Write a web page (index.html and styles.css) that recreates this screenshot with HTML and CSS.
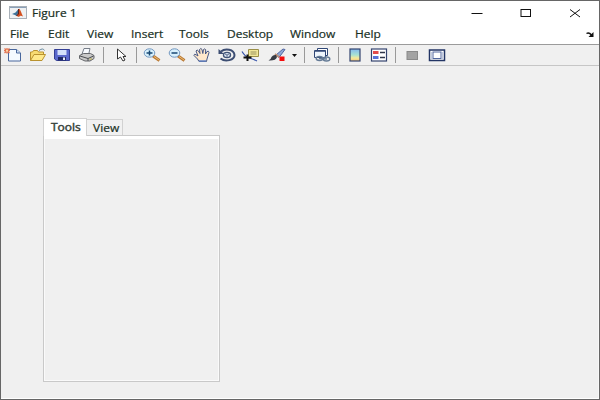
FILE: index.html
```html
<!DOCTYPE html>
<html lang="en">
<head>
<meta charset="utf-8">
<title>Figure 1</title>
<link rel="stylesheet" href="styles.css">
</head>
<body>
<div class="window">
  <header class="titlebar">
    <svg class="logo" width="18" height="13" viewBox="0 0 18 13"><rect x=".5" y=".5" width="17" height="12" fill="#eff1f3" stroke="#a9b1b9"/><path d="M1 1.500h16" stroke="#8aa0b8"/><path d="M3 8l3.500-1.500L9.500 3v5L7.500 10 6 9z" fill="#3d7198"/><path d="M10 2.500c1.500 1 2.500 5 4 8-2-1-3-1-4 .5C9.500 11 8.500 10 7.500 10 9 8 9.500 5 10 2.500z" fill="#d4501e"/><path d="M9.500 3v5L7.500 10" stroke="#5a2020" fill="none"/></svg>
    <span class="title">Figure 1</span>
    <div class="controls">
      <svg width="12" height="12"><path d="M.5 6.500h11" stroke="#111"/></svg>
      <svg width="12" height="12"><rect x="1" y="2.500" width="9.500" height="7" fill="none" stroke="#111"/></svg>
      <svg width="12" height="12"><path d="M1 2.500l10 7.500M11 2.500L1 10" stroke="#111"/></svg>
    </div>
  </header>
  <nav class="menubar">
    <span>File</span><span>Edit</span><span>View</span><span>Insert</span><span>Tools</span><span>Desktop</span><span>Window</span><span>Help</span>
    <svg class="dock-arrow" width="9" height="7"><path d="M.5 2.500Q3 1 5.500 4" fill="none" stroke="#111" stroke-width="1.400"/><path d="M7.500 1v5h-5z" fill="#111"/></svg>
  </nav>
  <div class="toolbar">
    <svg class="icon" viewBox="0 0 20 16"><path d="M5.500 2.500h8l4 3.500v8h-12z" fill="#f5faff" stroke="#49679c"/><path d="M13.500 2.500V6h4" fill="#cfe0f5" stroke="#49679c"/><path d="M1.500 1.500l5 4.500M6.500 1.500L1.500 6M1 3.700h6M4 1v5.500" stroke="#e2714e" stroke-width="1.300"/><rect x="3" y="2.700" width="2" height="2" fill="#ffd4a2"/></svg>
    <svg class="icon" viewBox="0 0 20 16"><path d="M2.500 13.500V5h2l1-1.500h4L10.500 5h5v3" fill="#f8dc72" stroke="#b9922f"/><path d="M2.500 13.500L6 7.500h11.500l-3.500 6z" fill="#ffe98a" stroke="#b9922f"/><path d="M11 3.500q4-3 5.500 0" fill="none" stroke="#688aa0"/></svg>
    <svg class="icon" viewBox="0 0 20 16"><path d="M2.500 2.500h15v11h-13l-2-1.500z" fill="#5b69cc" stroke="#343f94"/><path d="M5.500 3h9v5h-9z" fill="#d5e1fa"/><path d="M6 10h8v3.500H6z" fill="#202a66"/><path d="M11 10.500h2v2.500h-2z" fill="#e8edfa"/></svg>
    <svg class="icon" viewBox="0 0 20 16"><path d="M5 7l2-5.500h6L11.500 8z" fill="#f8fbff" stroke="#777e89"/><path d="M2.500 8.500l4-2h7l3.500 2v3L13 14H8l-5.500-2.500z" fill="#c8c8c8" stroke="#65676b"/><path d="M3 9l8 2.500 5.500-2.500M11 11.500V14" fill="none" stroke="#4a4c50"/><path d="M12.500 12h2.500" stroke="#bdae46"/></svg>
    <i class="sep"></i>
    <svg class="icon" viewBox="0 0 20 16"><path d="M6.500 2v10l3-2 2.500 4 2-1-2-3.500h3z" fill="#fff" stroke="#333"/></svg>
    <i class="sep"></i>
    <svg class="icon" viewBox="0 0 20 16"><path d="M11 9l6.500 4.500" stroke="#b97935" stroke-width="3"/><path d="M12 9.500l5 3.500" stroke="#edbd72"/><ellipse cx="7.500" cy="6" rx="5.300" ry="4.200" fill="#d7f0fc" stroke="#7196bf"/><path d="M4.500 6h6M7.500 3.500v5" stroke="#174773" stroke-width="1.500"/></svg>
    <svg class="icon" viewBox="0 0 20 16"><path d="M11 9l6.500 4.500" stroke="#b97935" stroke-width="3"/><path d="M12 9.500l5 3.500" stroke="#edbd72"/><ellipse cx="7.500" cy="6" rx="5.300" ry="4.200" fill="#d7f0fc" stroke="#7196bf"/><path d="M4.500 6h6" stroke="#174773" stroke-width="1.500"/></svg>
    <svg class="icon" viewBox="0 0 20 16"><path d="M7 14.500L5.500 12 2 8.500q0-2 2-.8L6 9 4 4q1-2 2.500 0L8 6.500 7.500 2.500q1.500-2 2.500 0l.8 4 .7-4q1.500-1.500 2.200.3L13.500 7 15 4.500q2-1 2 1L15 12l-.5 2.500z" fill="#ffe8cb" stroke="#465784"/><path d="M7 14h7" stroke="#6684c4" stroke-width="1.500"/></svg>
    <svg class="icon" viewBox="0 0 20 16"><path d="M4 4.500C8 1 17 2 17.500 8c0 5-9 7.500-14 3.500" fill="none" stroke="#3d4e73" stroke-width="2"/><path d="M1.500 2v5h5.500z" fill="#3d4e73"/><ellipse cx="10" cy="8" rx="3.500" ry="2.600" fill="#dfe9f7" stroke="#415477" stroke-width="1.400"/><path d="M8 7l2 1 2-1M10 8v2" fill="none" stroke="#415477" stroke-width=".8"/></svg>
    <svg class="icon" viewBox="0 0 20 16"><path d="M7.500 2.500h10v7h-10z" fill="#f1e79a" stroke="#9a8f48"/><path d="M9.500 5h6M9.500 7h6" stroke="#99915f"/><path d="M1 4.500q3 5 7 6.500 4 1 8 3" fill="none" stroke="#3452aa" stroke-width="1.200"/><path d="M2.500 10.500h8M6.500 7.500V14" stroke="#111" stroke-width="2"/></svg>
    <svg class="icon" viewBox="0 0 20 16"><path d="M9 8l7-6 2 .5-6 8z" fill="#8ea7d4" stroke="#5367a1"/><path d="M8 7l4 3" stroke="#bd8f76" stroke-width="2"/><path d="M1.500 13.500q2.500-1 3-3.500Q6 7.500 9 8l1 2q-1 4-8.500 3.500z" fill="#363b44"/><rect x="12.500" y="9.500" width="5" height="4.500" fill="#f40c0c"/></svg>
    <svg class="drop" viewBox="0 0 5 3"><path d="M0 0h5L2.500 3z" fill="#111"/></svg>
    <i class="sep"></i>
    <svg class="icon" viewBox="0 0 20 16"><path d="M5.500 1.500h10v7h-10z" fill="#fff" stroke="#304776"/><path d="M2.500 3.500h11v7h-11z" fill="#edf4fc" stroke="#304776"/><path d="M3 4h10.500" stroke="#304776" stroke-width="1.500"/><g fill="none" stroke="#657b96" stroke-width="1.400"><ellipse cx="7.500" cy="11.500" rx="3.300" ry="2"/><ellipse cx="14.500" cy="12" rx="3.300" ry="2"/><path d="M7 11.500l8 .5"/></g></svg>
    <i class="sep"></i>
    <svg class="icon" viewBox="0 0 20 16"><defs><linearGradient id="heat" x2="0" y2="1"><stop stop-color="#83b9ef"/><stop offset=".5" stop-color="#a9e2d2"/><stop offset=".75" stop-color="#f5e99a"/><stop offset="1" stop-color="#f4c67c"/></linearGradient></defs><rect x="5" y="2" width="10" height="12" fill="url(#heat)" stroke="#34446f" stroke-width="1.200"/></svg>
    <svg class="icon" viewBox="0 0 20 16"><rect x="2.500" y="2" width="15" height="12" fill="#fff" stroke="#34446f" stroke-width="1.200"/><path d="M4 4h5.500v3H4z" fill="#e34b4b"/><path d="M4 9h5.500v3H4z" fill="#5873d9"/><path d="M11 5.500h5M11 10.500h5" stroke="#30364a" stroke-width="1.300"/></svg>
    <i class="sep"></i>
    <svg class="icon" viewBox="0 0 20 16"><rect x="5" y="4.500" width="10.500" height="8" fill="#a3a3a3" stroke="#8a8a8a"/></svg>
    <svg class="icon" viewBox="0 0 20 16"><rect x="2.500" y="3" width="15" height="10.500" fill="#fff" stroke="#233565" stroke-width="1.500"/><rect x="6" y="5" width="8" height="6.500" fill="#fff" stroke="#52679d"/><path d="M4.500 5v7M15.500 5v7" stroke="#a8b5d3" stroke-width=".7"/></svg>
  </div>
  <main class="canvas">
    <div class="tabs"><div class="tab active"><span>Tools</span></div><div class="tab"><span>View</span></div></div>
    <section class="panel"></section>
  </main>
</div>
</body>
</html>
```
FILE: styles.css
```css
* { box-sizing: border-box; }
body { margin: 0; font: 10.5px/14px "Open Sans", "Noto Sans", sans-serif; color: #18301f; }
.window { width: 600px; height: 400px; display: flex; flex-direction: column; background: #f0f0f0; border: 1px solid #666; overflow: hidden; }
.titlebar { height: 23px; flex: none; display: flex; align-items: center; padding-left: 8px; background: #fff; }
.title { margin-left: 5px; transform: scaleX(1.14); transform-origin: left; -webkit-text-stroke: .2px; }
.controls { display: flex; gap: 37px; margin-left: auto; padding-right: 18px; }
.controls svg, .logo { display: block; }
.menubar { height: 20px; flex: none; display: grid; grid-template-columns: 38px 39px 44px 48px 48px 63px 65px 1fr 9px; align-items: center; padding: 0 4px 0 8.5px; background: #fff; }
.menubar span { width: max-content; transform: scaleX(1.14); transform-origin: left; -webkit-text-stroke: .2px; }
.toolbar { height: 22px; flex: none; display: grid; grid-template-columns: 24px 25px 24px 25px 8px 27px 5px 26px 24px 26px 23px 26px 25px 11px 9px 25px 8px 25px 24px 8px 26px 23px; align-items: center; justify-items: center; border-top: 1px solid #9b9b9b; border-bottom: 1px solid #c6c6c6; background: #f0f0f0; }
.icon { display: block; width: 20px; height: 16px; }
.drop { display: block; width: 5px; height: 3px; }
.sep { width: 1px; height: 16px; background: #999; }
.canvas { flex: 1; padding: 52px 0 0 42px; border-right: 1px solid #f8f8f8; border-bottom: 1px solid #fff; }
.tabs { height: 17px; display: flex; align-items: flex-end; }
.tab { width: 36px; height: 16px; padding: 1px 0 0 6px; border: 1px solid #d2d2d2; border-left: 0; border-bottom: 0; background: #f1f1f1; }
.tab span { display: block; width: max-content; transform: scaleX(1.14); transform-origin: left; -webkit-text-stroke: .2px; }
.tab.active { width: 44px; height: 18px; padding: 1px 0 0 6.5px; margin-bottom: -1px; border-left: 1px solid #d2d2d2; background: #fff; color: #39443d; position: relative; }
.active span { -webkit-text-stroke: .45px; }
.panel { width: 177px; height: 247px; border: 1px solid #c9c9c9; box-shadow: inset 0 3px #fff, inset -1px -1px #fafafa, inset 1px 0 #fafafa; }
```
